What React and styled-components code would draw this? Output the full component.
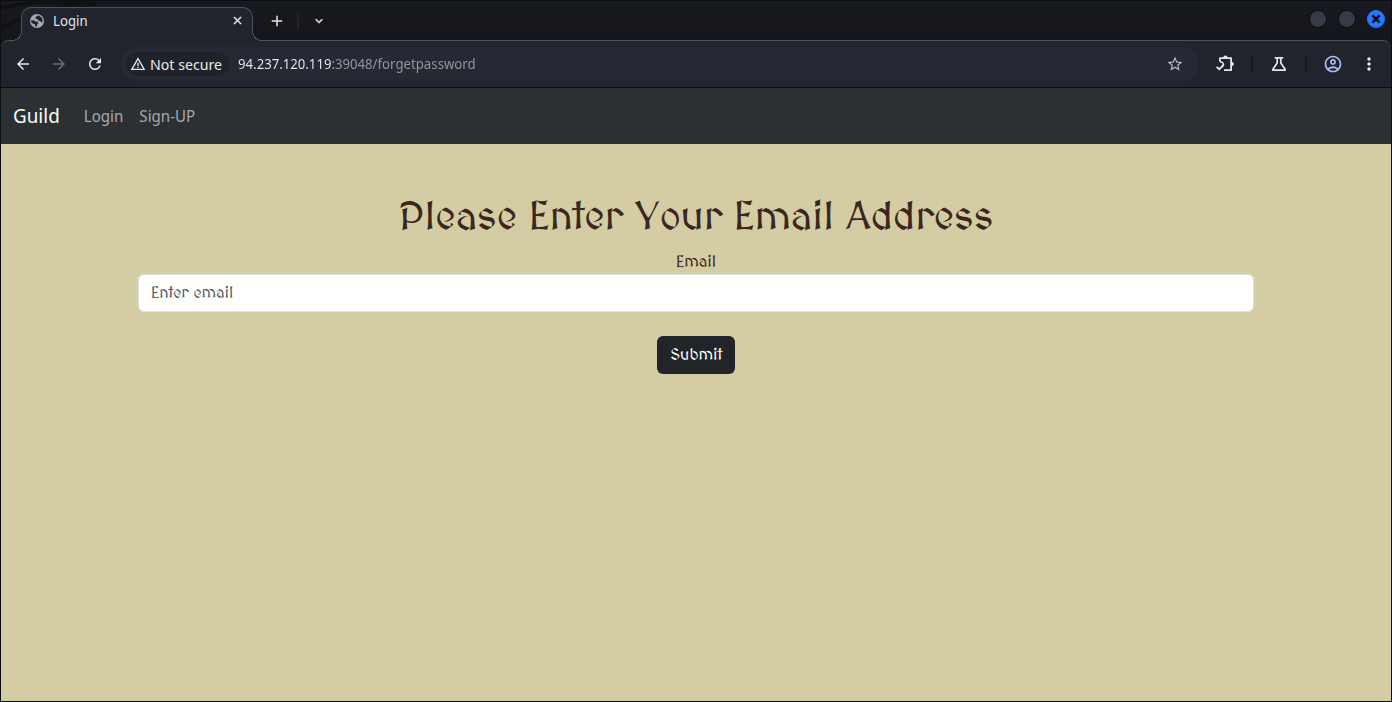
import React from 'react';
import styled, { createGlobalStyle, css } from 'styled-components';
import {
    MdAdd,
    MdArrowBack,
    MdArrowForward,
    MdClose,
    MdExpandMore,
    MdMoreVert,
    MdOutlineAccountCircle,
    MdRefresh,
    MdStarBorder,
    MdWarningAmber,
} from 'react-icons/md';

const GlobeIcon = () => (
    <svg width="16" height="16" viewBox="0 0 16 16" aria-hidden="true">
        <circle cx="8" cy="8" r="7" fill="#a3a7b0" />
        <path
            d="M8.6 2.4L6.4 4.4L6.8 5.8L8.8 6.2L9.2 7.6L11 8L12.6 9.4L13.6 8.2L13.4 6L12 4L10.2 2.8Z"
            fill="#22242d"
        />
        <path
            d="M2 7.4L4.8 7.2L6.4 8.4L8.6 8.8L9.4 10L8.2 11.2L8 13.6L6.2 13.2L5.8 11.2L4.2 10.8L2.4 9.4Z"
            fill="#22242d"
        />
    </svg>
);

const PuzzleIcon = () => (
    <svg width="20" height="20" viewBox="0 0 20 20" fill="none" aria-hidden="true">
        <path
            d="M4.9 7.4V4.1H16.1V16.2H9"
            stroke="currentColor"
            strokeWidth="1.8"
            strokeLinejoin="round"
        />
        <path d="M4.9 7.6C7.6 7.6 9 9.6 8.2 12" stroke="currentColor" strokeWidth="1.6" />
        <path d="M1.6 12.8L4.2 15.2L8.6 11" stroke="currentColor" strokeWidth="1.8" />
        <path d="M8.2 4A2.2 2.4 0 0 1 12.6 4Z" fill="currentColor" />
        <path d="M16.4 7.8A2.4 2.2 0 0 1 16.4 12.2Z" fill="currentColor" />
    </svg>
);

const FlaskIcon = () => (
    <svg width="18" height="18" viewBox="0 0 18 18" fill="none" aria-hidden="true">
        <path
            d="M4.8 2.8H13.2M7.2 3V8L2.9 14.2V15.2H15.1V14.2L10.8 8V3"
            stroke="currentColor"
            strokeWidth="1.7"
            strokeLinejoin="round"
        />
    </svg>
);

const App = () => {
    return (
        <>
            <GlobalStyle />
            <BrowserWindow>
                <TabStrip>
                    <Wallpaper viewBox="0 0 300 40" aria-hidden="true">
                        <path d="M0 7 Q40 -3 95 3" />
                        <path d="M0 27 Q36 8 78 2" />
                        <path d="M76 0 L86 8" />
                    </Wallpaper>
                    <Tab>
                        <GlobeIcon />
                        <TabTitle>Login</TabTitle>
                        <IconButton $size={16} $bold aria-label="Close tab">
                            <MdClose size={13} />
                        </IconButton>
                    </Tab>
                    <TabTools>
                        <IconButton $size={24} aria-label="New tab">
                            <MdAdd size={18} />
                        </IconButton>
                        <Divider />
                        <IconButton $size={24} $bold aria-label="Search tabs">
                            <MdExpandMore size={14} />
                        </IconButton>
                    </TabTools>
                    <WindowControls>
                        <WindowButton aria-label="Minimize" />
                        <WindowButton aria-label="Maximize" />
                        <WindowButton $close aria-label="Close">
                            <svg width="10" height="10" viewBox="0 0 10 10" aria-hidden="true">
                                <path d="M1.4 1.4L8.6 8.6M8.6 1.4L1.4 8.6" stroke="#11131a" strokeWidth="2.4" />
                            </svg>
                        </WindowButton>
                    </WindowControls>
                </TabStrip>

                <Toolbar>
                    <NavButtons>
                        <IconButton $size={20} aria-label="Back">
                            <MdArrowBack size={18} />
                        </IconButton>
                        <IconButton $size={20} $muted aria-label="Forward">
                            <MdArrowForward size={18} />
                        </IconButton>
                        <IconButton $size={20} aria-label="Reload">
                            <MdRefresh size={18} />
                        </IconButton>
                    </NavButtons>
                    <AddressBar>
                        <SecurityChip>
                            <MdWarningAmber size={16} />
                            Not secure
                        </SecurityChip>
                        <UrlInput
                            type="text"
                            aria-label="Address"
                            defaultValue="94.237.120.119:39048/forgetpassword"
                        />
                        <IconButton $size={20} $soft aria-label="Bookmark this page">
                            <MdStarBorder size={18} />
                        </IconButton>
                    </AddressBar>
                    <Actions>
                        <IconButton $size={20} aria-label="Extensions">
                            <PuzzleIcon />
                        </IconButton>
                        <Divider $dark />
                        <IconButton $size={20} aria-label="Experiments">
                            <FlaskIcon />
                        </IconButton>
                        <Divider $dark />
                        <IconButton $size={20} $blue aria-label="Profile">
                            <MdOutlineAccountCircle size={20} />
                        </IconButton>
                        <IconButton $size={20} aria-label="Menu">
                            <MdMoreVert size={20} />
                        </IconButton>
                    </Actions>
                </Toolbar>

                <Navbar>
                    <Brand href="/">Guild</Brand>
                    <NavLink href="/login">Login</NavLink>
                    <NavLink href="/signup">Sign-UP</NavLink>
                </Navbar>

                <Page>
                    <Form onSubmit={(e) => e.preventDefault()}>
                        <Title>Please Enter Your Email Address</Title>
                        <Label htmlFor="email">Email</Label>
                        <EmailInput id="email" type="email" placeholder="Enter email" />
                        <Submit type="submit">Submit</Submit>
                    </Form>
                </Page>
            </BrowserWindow>
        </>
    );
};

export default App;

const uiFont = '"Noto Sans Display", "Noto Sans", sans-serif';
const pageFont = 'MedievalSharp, Lato, sans-serif';

const GlobalStyle = createGlobalStyle`
    *, *::before, *::after {
        box-sizing: border-box;
    }
    body {
        margin: 0;
        background: #d4cda3;
        font-family: ${uiFont};
    }
    button, input {
        font: inherit;
    }
`;

const BrowserWindow = styled.div`
    display: flex;
    flex-direction: column;
    min-height: 100vh;
    border: 1px solid #0d0e12;
    background: #15161b;
`;

const TabStrip = styled.div`
    position: relative;
    display: flex;
    align-items: flex-end;
    height: 39px;
    padding: 0 6px 0 20px;
    background: linear-gradient(#181a21, #15161a);
`;

const Wallpaper = styled.svg`
    position: absolute;
    left: 0;
    top: 0;
    width: 300px;
    height: 40px;
    fill: none;
    stroke: #101115;
    stroke-width: 4px;
`;

const flare = css`
    content: '';
    position: absolute;
    bottom: 0;
    width: 10px;
    height: 10px;
`;

const Tab = styled.div`
    position: relative;
    z-index: 1;
    display: flex;
    align-items: center;
    width: 232px;
    height: 34px;
    margin-bottom: -1px;
    padding: 0 7px;
    padding-bottom: 8px;
    border: 1px solid #50525a;
    border-bottom: 0;
    border-radius: 10px 10px 0 0;
    background: #22242d;

    &::before {
        ${flare}
        left: -10px;
        background: radial-gradient(circle at 0 0, transparent 9px, #50525a 9px, #50525a 10px, #22242d 10px);
    }
    &::after {
        ${flare}
        right: -10px;
        background: radial-gradient(circle at 100% 0, transparent 9px, #50525a 9px, #50525a 10px, #22242d 10px);
    }
`;

const TabTitle = styled.span`
    flex: 1;
    padding-left: 8px;
    color: #dfe0e3;
    font-size: 14px;
    line-height: 20px;
`;

const TabTools = styled.div`
    display: flex;
    align-items: center;
    gap: 8px;
    height: 38px;
    padding-left: 12px;
`;

const Divider = styled.span`
    width: 2px;
    height: 16px;
    border-radius: 1px;
    background: ${({ $dark }) => ($dark ? '#15171c' : '#24262e')};
`;

const WindowControls = styled.div`
    position: relative;
    display: flex;
    align-items: center;
    gap: 11px;
    height: 36px;
    margin-left: auto;
    margin-bottom: 3px;
`;

const WindowButton = styled.button`
    display: flex;
    align-items: center;
    justify-content: center;
    width: 18px;
    height: 18px;
    padding: 0;
    border: 1px solid ${({ $close }) => ($close ? '#2777ff' : '#0a0b0e')};
    border-radius: 50%;
    background: ${({ $close }) => ($close ? '#2777ff' : '#363b47')};
`;

const IconButton = styled.button`
    display: flex;
    flex-shrink: 0;
    align-items: center;
    justify-content: center;
    width: ${({ $size }) => $size}px;
    height: ${({ $size }) => $size}px;
    padding: 0;
    border: 0;
    background: none;
    color: ${({ $muted, $soft, $blue }) =>
        ($muted && '#6b6c70') || ($soft && '#b9bac0') || ($blue && '#a5c3f8') || '#e6e6e6'};

    ${({ $bold }) => $bold && css`
        path:last-child {
            stroke: currentColor;
            stroke-width: 1px;
        }
    `}
`;

const Toolbar = styled.div`
    display: flex;
    align-items: center;
    height: 48px;
    padding: 0 12px;
    border-top: 1px solid #50525a;
    border-bottom: 1px solid #0c0d11;
    border-radius: 8px 8px 0 0;
    background: #22242d;
`;

const NavButtons = styled.div`
    display: flex;
    gap: 16px;
`;

const AddressBar = styled.div`
    display: flex;
    flex: 1;
    align-items: center;
    height: 34px;
    margin-left: 16px;
    padding: 0 14px 0 5px;
    border-radius: 17px;
    background: #262833;
`;

const SecurityChip = styled.button`
    display: flex;
    flex-shrink: 0;
    align-items: center;
    gap: 4px;
    height: 24px;
    padding: 0 8px 0 4px;
    border: 0;
    border-radius: 12px;
    background: #20222a;
    color: #e6e6e6;
    font-size: 15px;
    line-height: 20px;
    white-space: nowrap;
`;

// the host part is brighter than the port and path that follow it
const UrlInput = styled.input`
    flex: 1;
    min-width: 0;
    margin-left: 8px;
    padding: 0;
    border: 0;
    outline: 0;
    background: linear-gradient(to right, #e8e8ea 93px, #94959b 93px);
    background-clip: text;
    color: transparent;
    font-size: 14px;
    line-height: 20px;
`;

const Actions = styled.div`
    display: flex;
    align-items: center;
    gap: 16px;
    margin-left: 16px;
`;

const Navbar = styled.nav`
    display: flex;
    align-items: center;
    min-height: 56px;
    padding: 8px 12px;
    background: #2b3033;
`;

const Brand = styled.a`
    margin-right: 16px;
    color: #f5f5f5;
    font-size: 20px;
    line-height: 30px;
    text-decoration: none;
`;

const NavLink = styled.a`
    padding: 8px;
    color: #a4a6a8;
    font-size: 16px;
    line-height: 24px;
    text-decoration: none;
`;

const Page = styled.main`
    flex: 1;
    background: #d4cda3;
    color: #3b271f;
    font-family: ${pageFont};
`;

const Form = styled.form`
    display: flex;
    flex-direction: column;
    align-items: center;
    max-width: 1140px;
    margin: 0 auto;
    padding: 50px 12px;
`;

const Title = styled.h1`
    margin: 0 0 8px;
    font-size: 40px;
    font-weight: 400;
    line-height: 48px;
    text-align: center;
`;

const Label = styled.label`
    font-size: 16px;
    line-height: 24px;
`;

const EmailInput = styled.input`
    width: 100%;
    height: 38px;
    padding: 6px 12px;
    border: 1px solid #dee2e6;
    border-radius: 6px;
    background: #fff;
    color: #212529;
    font-size: 16px;
    line-height: 24px;

    &::placeholder {
        color: #595c5f;
        opacity: 1;
    }
`;

const Submit = styled.button`
    height: 38px;
    margin-top: 24px;
    padding: 6px 13px;
    border: 0;
    border-radius: 6px;
    background: #212529;
    color: #fff;
    font-size: 16px;
    line-height: 24px;
`;
